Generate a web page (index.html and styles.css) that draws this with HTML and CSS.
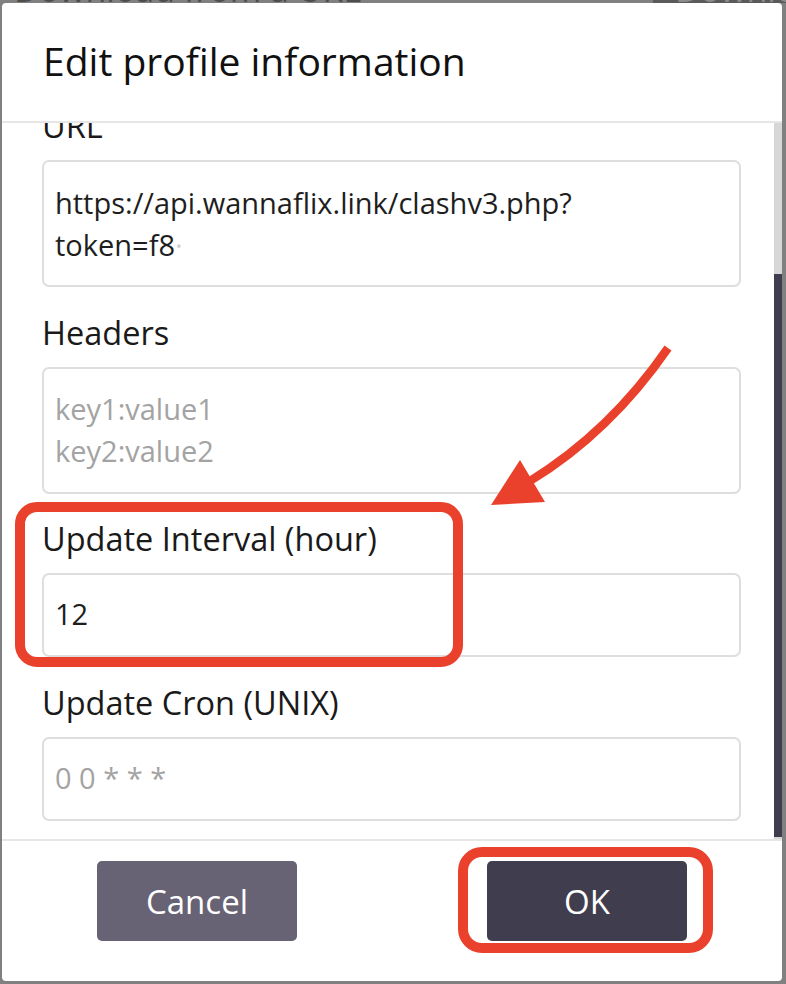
FILE: index.html
```html
<!DOCTYPE html>
<html lang="en">
<head>
<meta charset="utf-8">
<title>Edit profile information</title>
<link rel="stylesheet" href="styles.css">
</head>
<body>
<div class="backdrop">
  <span class="bg-text">Download from a URL</span>
  <span class="bg-block"><span class="bg-block-text">Downloa</span></span>
</div>
<div class="dialog">
  <header class="dlg-head"><h1 class="dlg-title">Edit profile information</h1></header>
  <div class="dlg-body">
    <div class="fields">
      <div class="field">
        <label class="field-label">URL</label>
        <div class="box box-tall"><div class="line">https://api.wannaflix.link/clashv3.php?</div><div class="line">token=f8<span class="fade">·</span></div></div>
      </div>
      <div class="field">
        <label class="field-label">Headers</label>
        <div class="box box-tall placeholder"><div class="line">key1:value1</div><div class="line">key2:value2</div></div>
      </div>
      <div class="field">
        <label class="field-label">Update Interval (hour)</label>
        <div class="box box-short"><div class="line">12</div></div>
      </div>
      <div class="field">
        <label class="field-label">Update Cron (UNIX)</label>
        <div class="box box-short placeholder"><div class="line">0 0 * * *</div></div>
      </div>
    </div>
    <div class="scrollbar"><div class="thumb"></div></div>
  </div>
  <footer class="dlg-foot">
    <button class="btn btn-cancel">Cancel</button>
    <button class="btn btn-ok">OK</button>
  </footer>
</div>
<svg class="annot" width="786" height="984" viewBox="0 0 786 984">
  <rect x="20" y="507" width="438" height="155" rx="17" ry="17" fill="none" stroke="#e9412b" stroke-width="10"/>
  <rect x="463" y="852" width="245" height="96" rx="19" ry="19" fill="none" stroke="#e9412b" stroke-width="10"/>
  <path d="M668 348 Q610 432 530 481" fill="none" stroke="#e9412b" stroke-width="8.5"/>
  <polygon points="491,505 520,460 545,502" fill="#e9412b"/>
</svg>
</body>
</html>
```
FILE: styles.css
```css
* { box-sizing: border-box; }
html, body { margin: 0; }
body {
  width: 786px;
  height: 984px;
  overflow: hidden;
  position: relative;
  background: #808080;
  padding: 3px 4px 3px 2px;
  font-family: "Open Sans", "Noto Sans", sans-serif;
}
.backdrop {
  position: absolute;
  left: 0; top: 0; right: 0;
  height: 3px;
  overflow: hidden;
}
.bg-text {
  position: absolute;
  left: 14px; top: -28px;
  font-size: 34px;
  line-height: 34px;
  color: #4d4d4d;
  white-space: nowrap;
}
.bg-block {
  position: absolute;
  left: 653px; top: 0; right: 0; height: 3px;
  background: #5a5a5a;
}
.bg-block-text {
  position: absolute;
  left: 22px; top: -28px;
  font-size: 34px; line-height: 34px;
  color: #8a8a8a;
}
.dialog {
  position: relative;
  width: 780px;
  height: 978px;
  background: #fff;
  border-radius: 4px;
  display: flex;
  flex-direction: column;
  overflow: hidden;
}
.dlg-head {
  flex: 0 0 auto;
  height: 120px;
  border-bottom: 2px solid #e6e6e6;
  padding: 0 41px 2px;
  display: flex;
  align-items: center;
}
.dlg-title {
  margin: 0;
  font-size: 39px;
  font-weight: 400;
  color: #111;
  line-height: 50px;
}
.dlg-body {
  flex: 1 1 auto;
  display: flex;
  overflow: hidden;
  min-height: 0;
}
.fields {
  flex: 1 1 auto;
  padding: 0 33px 0 40px;
  margin-top: -17px;
}
.field { margin-bottom: 25.5px; }
.field-label {
  display: block;
  font-size: 32.5px;
  line-height: 40px;
  color: #1a1a1a;
  margin-bottom: 14px;
  white-space: nowrap;
}
.box {
  border: 2px solid #dedede;
  border-radius: 7px;
  font-size: 29px;
  color: #1e1e1e;
  padding: 0 11px;
  overflow: hidden;
  white-space: nowrap;
}
.box-tall {
  height: 127px;
  padding-top: 19.5px;
  line-height: 42px;
}
.box-short {
  height: 84px;
  line-height: 78px;
}
.placeholder { color: #a3a3a3; }
.fade { color: #d0d0d0; }
.scrollbar {
  flex: 0 0 8px;
  width: 8px;
  background: #d7d7d7;
  padding: 151px 0 2px;
}
.thumb {
  height: 100%;
  background: #403d4f;
}
.dlg-foot {
  flex: 0 0 auto;
  height: 142px;
  border-top: 2px solid #e6e6e6;
  padding: 20px 0 40px;
  display: flex;
  justify-content: space-around;
}
.btn {
  width: 200px;
  height: 80px;
  border: 0;
  border-radius: 5px;
  color: #fff;
  font-family: "Open Sans", "Noto Sans", sans-serif;
  font-size: 33px;
  padding: 0;
}
.btn-cancel { background: #676274; }
.btn-ok { background: #403d4f; }
.annot {
  position: absolute;
  left: 0; top: 0;
  pointer-events: none;
}
```
